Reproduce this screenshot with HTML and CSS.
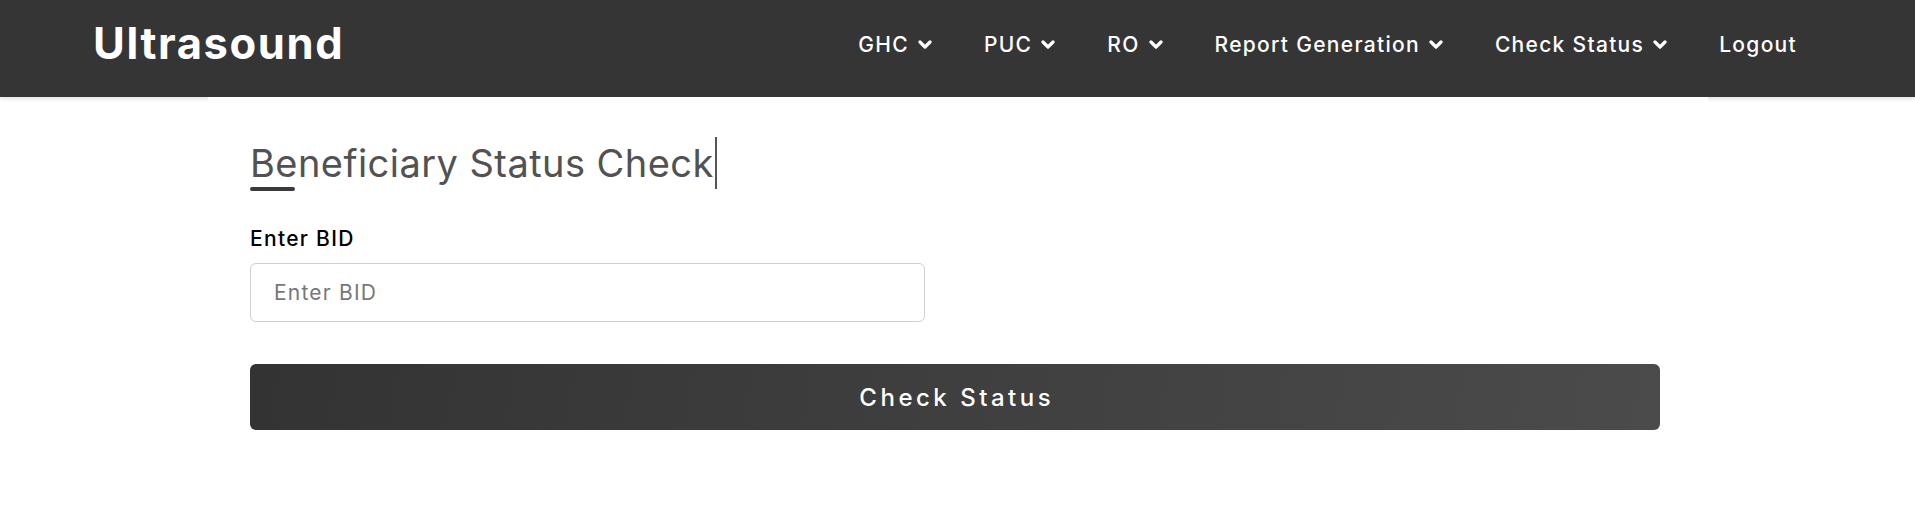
FILE: index.html
```html
<!DOCTYPE html>
<html lang="en">
<head>
<meta charset="utf-8">
<title>Ultrasound - Beneficiary Status Check</title>
<link rel="stylesheet" href="styles.css">
</head>
<body>
<header class="topbar">
  <div class="topbar-inner">
    <a class="brand" href="#">Ultrasound</a>
    <nav class="menu">
      <a class="menu-item" href="#"><span>GHC</span><svg class="chev" viewBox="0 0 14 9"><path d="M2 2 L7 7 L12 2"/></svg></a>
      <a class="menu-item" href="#"><span>PUC</span><svg class="chev" viewBox="0 0 14 9"><path d="M2 2 L7 7 L12 2"/></svg></a>
      <a class="menu-item" href="#"><span>RO</span><svg class="chev" viewBox="0 0 14 9"><path d="M2 2 L7 7 L12 2"/></svg></a>
      <a class="menu-item" href="#"><span>Report Generation</span><svg class="chev" viewBox="0 0 14 9"><path d="M2 2 L7 7 L12 2"/></svg></a>
      <a class="menu-item" href="#"><span>Check Status</span><svg class="chev" viewBox="0 0 14 9"><path d="M2 2 L7 7 L12 2"/></svg></a>
      <a class="menu-item" href="#"><span>Logout</span></a>
    </nav>
  </div>
</header>
<main class="page">
  <section class="status-form">
    <h1 class="title"><span class="typed">Beneficiary Status Check</span></h1>
    <label class="field-label" for="bid">Enter BID</label>
    <input id="bid" class="field-input" type="text" placeholder="Enter BID">
    <button class="submit-btn" type="button">Check Status</button>
  </section>
</main>
</body>
</html>
```
FILE: styles.css
```css
* { box-sizing: border-box; }
html, body { margin: 0; padding: 0; }
body {
  font-family: "Inter", "Noto Sans", sans-serif;
  background: #ffffff;
  color: #222;
}
.topbar {
  background: #353535;
  height: 97px;
  box-shadow: 0 2px 4px rgba(0,0,0,0.12);
}
.topbar-inner {
  height: 100%;
  display: flex;
  align-items: center;
  padding: 0 118px 9px 93px;
}
.brand {
  color: #fff;
  text-decoration: none;
  font-weight: 700;
  font-size: 43.5px;
  letter-spacing: 1.6px;
  line-height: 1;
}
.menu {
  margin-left: auto;
  display: flex;
  align-items: center;
  gap: 52px;
}
.menu-item {
  display: flex;
  align-items: center;
  color: #fff;
  text-decoration: none;
  font-size: 21px;
  font-weight: 500;
  letter-spacing: 1.3px;
}
.chev {
  width: 14px;
  height: 9px;
  margin-left: 9px;
  fill: none;
  stroke: #fff;
  stroke-width: 3.2;
  stroke-linecap: round;
  stroke-linejoin: round;
}
.page {
  max-width: 1500px;
  margin: 0 auto;
  background: #fff;
  padding: 0 47.5px 0 42.5px;
}
.status-form {
  display: flex;
  flex-direction: column;
  align-items: flex-start;
}
.title {
  margin: 40px 0 0;
  font-size: 38px;
  font-weight: 400;
  letter-spacing: 0.45px;
  color: #525252;
}
.typed {
  display: inline-block;
  line-height: 52px;
  padding-right: 1px;
  border-right: 2px solid #555;
}
.title::after {
  content: "";
  display: block;
  width: 45px;
  height: 4px;
  margin-top: -2px;
  border-radius: 2px;
  background: #3a3a3a;
}
.field-label {
  margin-top: 33px;
  font-size: 21px;
  line-height: 30px;
  font-weight: 500;
  letter-spacing: 1.3px;
  color: #000;
}
.field-input {
  margin-top: 9px;
  width: 675px;
  height: 59px;
  padding: 0 23px;
  border: 1px solid #cfcfcf;
  border-radius: 6px;
  font-family: inherit;
  font-size: 21px;
  letter-spacing: 1.2px;
  color: #333;
  outline: none;
}
.field-input::placeholder { color: #777; }
.submit-btn {
  margin-top: 42px;
  width: 100%;
  height: 66px;
  border: none;
  border-radius: 6px;
  background: linear-gradient(100deg, #333333 0%, #4b4b4b 100%);
  color: #fff;
  font-family: inherit;
  font-size: 24px;
  font-weight: 500;
  letter-spacing: 3.5px;
  padding: 0 0 0 3.5px;
  cursor: pointer;
}
```
